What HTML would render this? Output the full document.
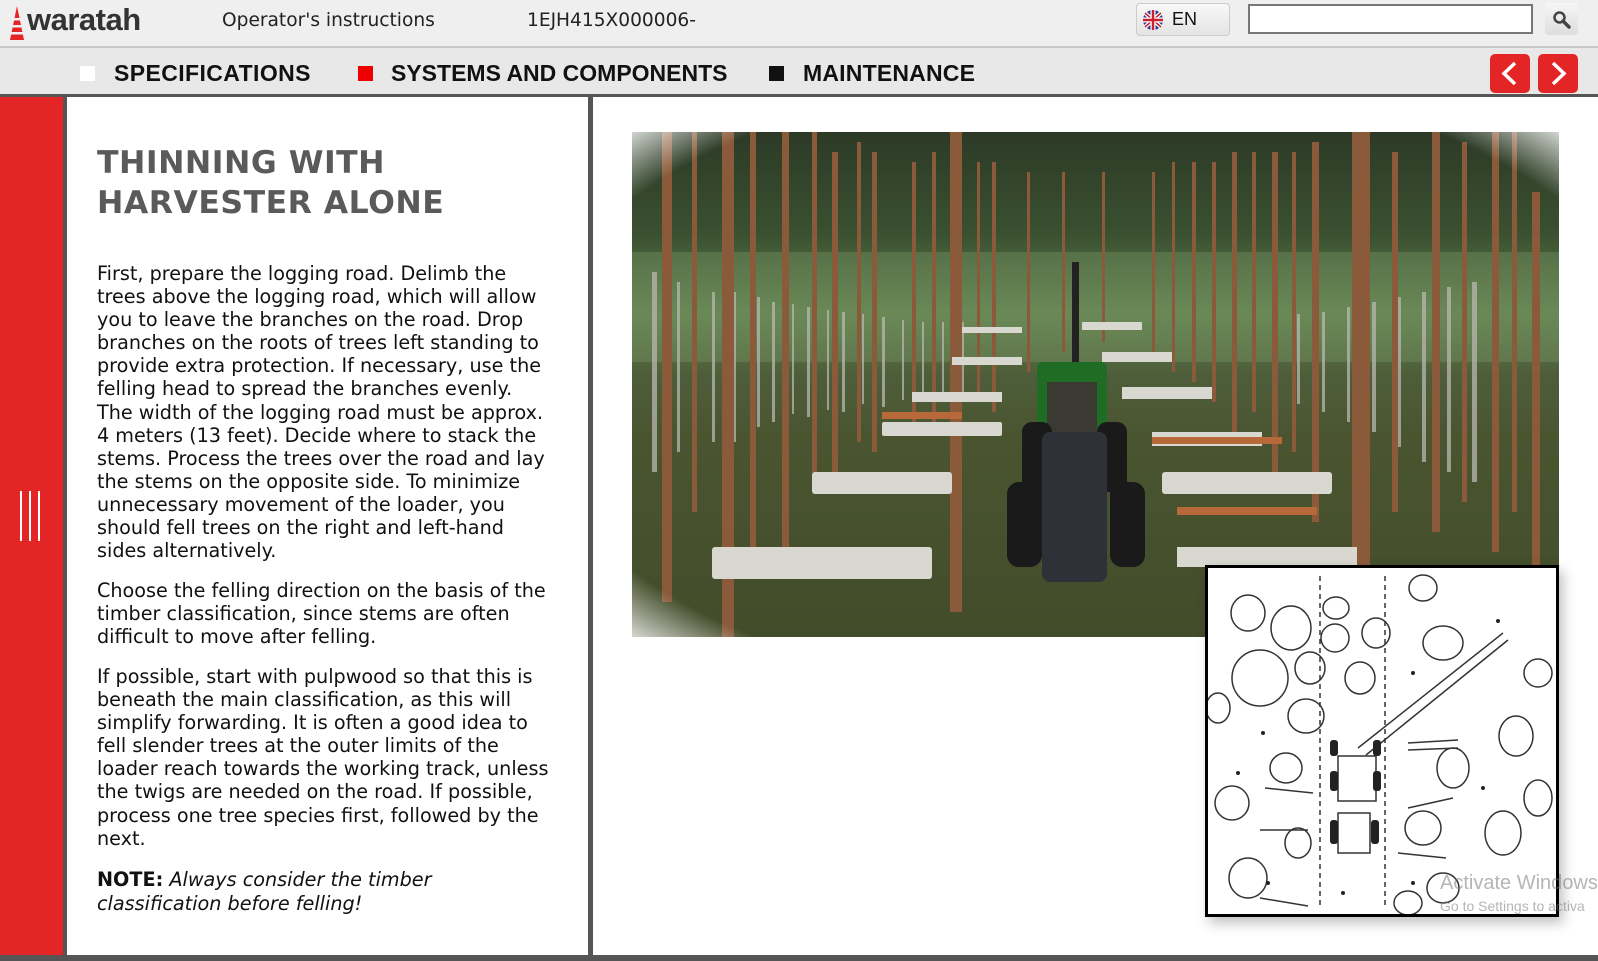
<!DOCTYPE html>
<html><head><meta charset="utf-8"><style>
*{margin:0;padding:0;box-sizing:border-box}
html,body{width:1598px;height:961px;overflow:hidden;background:#e9e9e9;font-family:"DejaVu Sans",Verdana,sans-serif}
.abs{position:absolute}
#hdr{left:0;top:0;width:1598px;height:48px;background:#efefef;border-bottom:2px solid #c8c8c8}
#nav{left:0;top:50px;width:1598px;height:47px;background:#e8e8e8;border-bottom:3px solid #555}
.ni{position:absolute;top:10px;font-family:"Liberation Sans",sans-serif;font-weight:bold;font-size:23px;color:#111}
.sq{position:absolute;top:16px;width:15px;height:15px}
#side{left:0;top:97px;width:63px;height:858px;background:#e32526}
#lp{left:63px;top:97px;width:530px;height:858px;background:#fff;border-left:4px solid #555;border-right:5px solid #555}
#rp{left:593px;top:97px;width:1005px;height:858px;background:#fff}
#bot{left:0;top:955px;width:1598px;height:6px;background:#555}
h1{position:absolute;left:30px;top:46px;font-size:31.5px;line-height:40px;color:#5a5a5a;font-weight:bold;letter-spacing:.5px}
.p{position:absolute;left:30px;font-size:19.2px;line-height:23.1px;color:#111;white-space:nowrap}
.btn{position:absolute;top:54px;width:40px;height:39px;background:#e32526;border-radius:5px}
</style></head><body>
<div id="hdr" class="abs">
 <svg class="abs" style="left:8px;top:6px" width="18" height="36" viewBox="0 0 18 36"><polygon points="9,0 2,34 16,34" fill="#e32526"/><rect x="0" y="12" width="18" height="2.5" fill="#efefef"/><rect x="0" y="19" width="18" height="2.5" fill="#efefef"/><rect x="0" y="26" width="18" height="2.5" fill="#efefef"/></svg>
 <div class="abs" style="left:27px;top:2px;font-family:'Liberation Sans',sans-serif;font-weight:bold;font-size:31px;color:#333;letter-spacing:-.5px">waratah</div>
 <div class="abs" style="left:222px;top:10px;font-size:18.6px;color:#222">Operator's instructions</div>
 <div class="abs" style="left:527px;top:10px;font-size:18.6px;color:#222">1EJH415X000006-</div>
 <div class="abs" style="left:1136px;top:3px;width:94px;height:33px;background:linear-gradient(#f8f8f8,#e4e4e4);border:1px solid #ccc;border-radius:4px">
  <svg class="abs" style="left:5px;top:5px" width="22" height="22" viewBox="0 0 22 22"><circle cx="11" cy="11" r="10" fill="#2a3f8f"/><path d="M3 4L19 18M19 4L3 18" stroke="#fff" stroke-width="4"/><path d="M3 4L19 18M19 4L3 18" stroke="#c8202f" stroke-width="1.5"/><path d="M11 1V21M1 11H21" stroke="#fff" stroke-width="5"/><path d="M11 1V21M1 11H21" stroke="#c8202f" stroke-width="2.5"/></svg>
  <div class="abs" style="left:35px;top:5px;font-family:'Liberation Sans',sans-serif;font-size:18px;color:#111">EN</div>
 </div>
 <div class="abs" style="left:1248px;top:4px;width:285px;height:30px;background:#fff;border:2px solid #777"></div>
 <div class="abs" style="left:1545px;top:3px;width:33px;height:32px;background:linear-gradient(#f6f6f6,#ddd);border-radius:3px">
  <svg class="abs" style="left:7px;top:7px" width="19" height="19" viewBox="0 0 19 19"><circle cx="7.5" cy="7.5" r="5" fill="none" stroke="#444" stroke-width="2.5"/><path d="M11 11L17 17" stroke="#444" stroke-width="3.5" stroke-linecap="round"/></svg>
 </div>
</div>
<div id="nav" class="abs">
 <div class="sq" style="left:80px;background:#fff"></div><div class="ni" style="left:114px;letter-spacing:.4px">SPECIFICATIONS</div>
 <div class="sq" style="left:358px;background:#e00"></div><div class="ni" style="left:391px">SYSTEMS AND COMPONENTS</div>
 <div class="sq" style="left:769px;background:#111"></div><div class="ni" style="left:803px;letter-spacing:.2px">MAINTENANCE</div>
</div>
<div class="btn" style="left:1490px"><svg width="40" height="39"><path d="M25 9L14 19.5L25 30" fill="none" stroke="#fff" stroke-width="3.5"/></svg></div>
<div class="btn" style="left:1538px"><svg width="40" height="39"><path d="M15 9L26 19.5L15 30" fill="none" stroke="#fff" stroke-width="3.5"/></svg></div>
<div id="side" class="abs"><svg class="abs" style="left:19px;top:394px" width="24" height="50"><path d="M2 0V50M11 0V50M20 0V50" stroke="#fff" stroke-width="2"/></svg></div>
<div id="lp" class="abs">
 <h1>THINNING WITH<br>HARVESTER ALONE</h1>
 <div class="p" style="top:165px">First, prepare the logging road. Delimb the<br>trees above the logging road, which will allow<br>you to leave the branches on the road. Drop<br>branches on the roots of trees left standing to<br>provide extra protection. If necessary, use the<br>felling head to spread the branches evenly.<br>The width of the logging road must be approx.<br>4 meters (13 feet). Decide where to stack the<br>stems. Process the trees over the road and lay<br>the stems on the opposite side. To minimize<br>unnecessary movement of the loader, you<br>should fell trees on the right and left-hand<br>sides alternatively.</div>
 <div class="p" style="top:482px">Choose the felling direction on the basis of the<br>timber classification, since stems are often<br>difficult to move after felling.</div>
 <div class="p" style="top:568px">If possible, start with pulpwood so that this is<br>beneath the main classification, as this will<br>simplify forwarding. It is often a good idea to<br>fell slender trees at the outer limits of the<br>loader reach towards the working track, unless<br>the twigs are needed on the road. If possible,<br>process one tree species first, followed by the<br>next.</div>
 <div class="p" style="top:771px;line-height:24px"><b>NOTE:</b> <i>Always consider the timber<br>classification before felling!</i></div>
</div>
<div id="rp" class="abs"></div>
<div class="abs" style="left:632px;top:132px;width:927px;height:505px;overflow:hidden;">
<svg width="927" height="505" viewBox="0 0 927 505">
<defs>
<linearGradient id="bg" x1="0" y1="0" x2="0" y2="1"><stop offset="0" stop-color="#2c3a26"/><stop offset=".2" stop-color="#3a5030"/><stop offset=".36" stop-color="#62804f"/><stop offset=".48" stop-color="#4e5e3a"/><stop offset=".6" stop-color="#4a5530"/><stop offset="1" stop-color="#434c2a"/></linearGradient>
<radialGradient id="fade" cx=".5" cy=".5" r=".72"><stop offset=".86" stop-color="#fff" stop-opacity="0"/><stop offset="1" stop-color="#fff" stop-opacity=".9"/></radialGradient>
</defs>
<rect width="927" height="505" fill="url(#bg)"/>
<rect x="0" y="120" width="927" height="110" fill="#7a9a66" opacity=".35"/>
<g fill="#b8b8b0" opacity=".75">
<rect x="20" y="140" width="5" height="200"/><rect x="45" y="150" width="3" height="170"/><rect x="60" y="150" width="4" height="170"/><rect x="80" y="160" width="3" height="150"/><rect x="100" y="160" width="4" height="150"/><rect x="125" y="165" width="3" height="130"/><rect x="140" y="170" width="3" height="120"/><rect x="160" y="172" width="2" height="110"/><rect x="175" y="175" width="3" height="110"/><rect x="195" y="178" width="2" height="100"/><rect x="210" y="180" width="3" height="100"/><rect x="230" y="182" width="2" height="90"/><rect x="250" y="185" width="3" height="90"/><rect x="270" y="188" width="2" height="80"/><rect x="290" y="190" width="2" height="80"/><rect x="310" y="190" width="2" height="70"/><rect x="330" y="190" width="2" height="70"/><rect x="580" y="190" width="2" height="70"/><rect x="600" y="190" width="2" height="70"/><rect x="620" y="188" width="2" height="75"/><rect x="640" y="185" width="3" height="80"/><rect x="665" y="182" width="3" height="90"/><rect x="690" y="180" width="3" height="100"/><rect x="715" y="175" width="3" height="115"/><rect x="740" y="170" width="4" height="130"/><rect x="765" y="165" width="4" height="150"/><rect x="790" y="160" width="4" height="170"/><rect x="815" y="155" width="4" height="185"/><rect x="840" y="150" width="5" height="200"/><rect x="880" y="140" width="5" height="230"/>
</g>
<g fill="#8a5a3a">
<rect x="30" y="0" width="10" height="470"/><rect x="90" y="0" width="12" height="505"/><rect x="150" y="0" width="7" height="420"/><rect x="200" y="20" width="6" height="340"/><rect x="240" y="20" width="5" height="300"/><rect x="280" y="30" width="4" height="260"/><rect x="318" y="0" width="12" height="480"/><rect x="360" y="30" width="4" height="250"/><rect x="395" y="40" width="3" height="200"/><rect x="430" y="40" width="3" height="180"/><rect x="470" y="40" width="3" height="170"/><rect x="520" y="40" width="3" height="180"/><rect x="560" y="30" width="4" height="220"/><rect x="600" y="20" width="5" height="280"/><rect x="640" y="20" width="6" height="320"/><rect x="680" y="10" width="7" height="380"/><rect x="720" y="0" width="18" height="480"/><rect x="800" y="0" width="8" height="400"/><rect x="860" y="0" width="7" height="420"/><rect x="900" y="60" width="8" height="380"/><rect x="180" y="0" width="5" height="360"/><rect x="118" y="0" width="6" height="440"/><rect x="760" y="20" width="6" height="360"/><rect x="580" y="30" width="4" height="240"/><rect x="60" y="0" width="5" height="380"/><rect x="225" y="10" width="4" height="300"/><rect x="300" y="20" width="4" height="280"/><rect x="345" y="30" width="3" height="230"/><rect x="540" y="30" width="3" height="210"/><rect x="620" y="20" width="4" height="260"/><rect x="660" y="20" width="4" height="300"/><rect x="830" y="10" width="5" height="360"/><rect x="880" y="0" width="5" height="380"/>
</g>
<g fill="#d8d8d0">
<rect x="80" y="415" width="220" height="32" rx="3"/><rect x="180" y="340" width="140" height="22" rx="3"/><rect x="250" y="290" width="120" height="14" rx="2"/><rect x="280" y="260" width="90" height="10"/><rect x="320" y="225" width="70" height="8"/><rect x="330" y="195" width="60" height="6"/><rect x="530" y="340" width="170" height="22" rx="3"/><rect x="520" y="300" width="110" height="14"/><rect x="490" y="255" width="90" height="12"/><rect x="470" y="220" width="70" height="10"/><rect x="450" y="190" width="60" height="8"/><rect x="545" y="415" width="180" height="20"/>
</g>
<g fill="#b8693a"><rect x="545" y="375" width="140" height="8"/><rect x="520" y="305" width="130" height="7"/><rect x="250" y="280" width="80" height="7"/></g>
<rect x="440" y="130" width="7" height="120" fill="#222"/>
<rect x="405" y="230" width="70" height="80" fill="#1f6d25" rx="6"/>
<rect x="415" y="250" width="50" height="60" fill="#3a3a32"/>
<rect x="390" y="290" width="30" height="70" fill="#1a1a1a" rx="10"/><rect x="465" y="290" width="30" height="70" fill="#1a1a1a" rx="10"/>
<rect x="410" y="300" width="65" height="150" fill="#2e3238" rx="8"/>
<rect x="375" y="350" width="35" height="85" fill="#1a1a1a" rx="12"/><rect x="478" y="350" width="35" height="85" fill="#1a1a1a" rx="12"/>
<rect width="927" height="505" fill="url(#fade)"/>
</svg></div>
<div class="abs" style="left:1205px;top:565px;width:354px;height:352px;background:#fff;border:3px solid #000;box-shadow:4px 6px 12px rgba(0,0,0,.25)">
<svg width="348" height="346" viewBox="0 0 348 346" fill="none" stroke="#333" stroke-width="1.5">
<path d="M112 8V340M177 8V340" stroke-dasharray="5 4"/>
<ellipse cx="40" cy="45" rx="17" ry="18"/><ellipse cx="83" cy="60" rx="20" ry="22"/><ellipse cx="52" cy="110" rx="28" ry="28"/><ellipse cx="102" cy="100" rx="15" ry="16"/><ellipse cx="98" cy="148" rx="18" ry="17"/><ellipse cx="10" cy="140" rx="12" ry="15"/><ellipse cx="78" cy="200" rx="16" ry="15"/><ellipse cx="24" cy="235" rx="17" ry="17"/><ellipse cx="90" cy="275" rx="13" ry="15"/><ellipse cx="40" cy="310" rx="19" ry="20"/>
<ellipse cx="128" cy="40" rx="13" ry="11"/><ellipse cx="127" cy="70" rx="14" ry="14"/><ellipse cx="152" cy="110" rx="15" ry="16"/><ellipse cx="168" cy="65" rx="14" ry="15"/>
<ellipse cx="215" cy="20" rx="14" ry="13"/><ellipse cx="235" cy="75" rx="20" ry="17"/><ellipse cx="308" cy="168" rx="17" ry="20"/><ellipse cx="245" cy="200" rx="16" ry="20"/><ellipse cx="215" cy="260" rx="18" ry="17"/><ellipse cx="295" cy="265" rx="18" ry="22"/><ellipse cx="235" cy="320" rx="16" ry="15"/><ellipse cx="330" cy="105" rx="14" ry="14"/><ellipse cx="330" cy="230" rx="14" ry="18"/><ellipse cx="200" cy="335" rx="14" ry="12"/>
<path d="M150 180L295 65M158 187L300 72" stroke-width="1.5"/>
<rect x="130" y="188" width="38" height="45" fill="#fff"/><rect x="130" y="245" width="32" height="40" fill="#fff"/>
<g fill="#222" stroke="none"><rect x="122" y="172" width="8" height="16" rx="3"/><rect x="165" y="172" width="8" height="16" rx="3"/><rect x="122" y="203" width="8" height="20" rx="3"/><rect x="165" y="203" width="8" height="20" rx="3"/><rect x="122" y="252" width="8" height="24" rx="3"/><rect x="163" y="252" width="8" height="24" rx="3"/>
<circle cx="55" cy="165" r="2"/><circle cx="30" cy="205" r="2"/><circle cx="205" cy="105" r="2"/><circle cx="290" cy="53" r="2"/><circle cx="275" cy="220" r="2"/><circle cx="135" cy="325" r="2"/><circle cx="205" cy="315" r="2"/><circle cx="60" cy="315" r="2"/></g>
<path d="M200 175L250 172M200 182L250 180M57 220L105 225M52 262L100 262M200 240L245 230M190 285L238 290M52 330L100 338"/>
</svg></div>
<div class="abs" style="left:1440px;top:872px;font-family:'Liberation Sans',sans-serif;font-size:20px;color:rgba(120,120,120,.55)">Activate Windows</div>
<div class="abs" style="left:1440px;top:898px;font-family:'Liberation Sans',sans-serif;font-size:14px;color:rgba(120,120,120,.55)">Go to Settings to activa</div>
<div id="bot" class="abs"></div>
</body></html>
